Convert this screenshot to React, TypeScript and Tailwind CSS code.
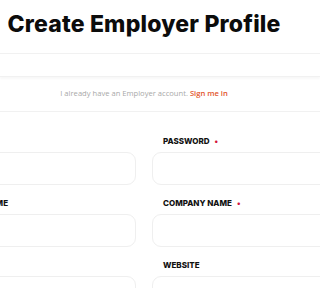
import React from 'react';

const heading = { fontFamily: 'Inter, "Liberation Sans", sans-serif' };
const body = { fontFamily: '"Open Sans", "Liberation Sans", sans-serif' };

function Field({ label, required }: { label: string; required?: boolean }) {
  return (
    <div className="flex flex-col">
      <label
        className="h-3 pl-[11px] text-[8px] leading-3 font-extrabold uppercase text-[#111] whitespace-nowrap"
        style={heading}
      >
        {label}
        {required && <span className="ml-[5px] text-[#d4143c]">•</span>}
      </label>
      <input className="mt-[5px] h-[33px] w-full rounded-[9px] border border-[#efefef] bg-white outline-none" />
    </div>
  );
}

export default function App() {
  return (
    <div className="w-full h-[288px] overflow-hidden bg-white">
      <div className="flex w-[288px] justify-center pt-[9px] pb-[14px]">
        <h1
          className="text-[23px] leading-[30px] font-extrabold tracking-[0.2px] text-[#0c0c0c] whitespace-nowrap"
          style={heading}
        >
          Create Employer Profile
        </h1>
      </div>
      <div className="h-[24px] border-t border-b border-[#f1f1f1] shadow-[0_2px_2px_rgba(0,0,0,0.03)]"></div>
      <div className="h-[35px] border-b border-[#f1f1f1]">
        <div
          className="flex h-full w-[288px] items-center justify-center text-[7.6px] text-[#a8a8a8]"
          style={body}
        >
          <span>
            I already have an Employer account.{' '}
            <a href="#" className="font-semibold text-[#e2552b]">
              Sign me in
            </a>
          </span>
        </div>
      </div>
      <div className="pt-[23px]">
        <form className="-ml-[49px] grid w-[386px] grid-cols-2 gap-x-4 gap-y-3">
          <Field label="Email" />
          <Field label="Password" required />
          <Field label="Full Name" />
          <Field label="Company Name" required />
          <Field label="Phone" />
          <Field label="Website" />
        </form>
      </div>
    </div>
  );
}
